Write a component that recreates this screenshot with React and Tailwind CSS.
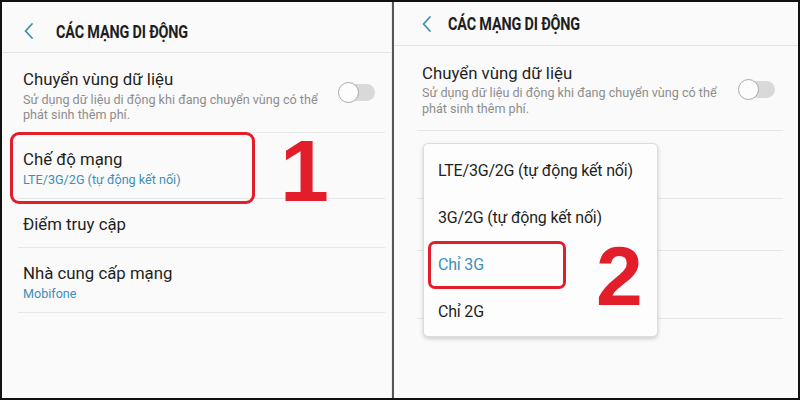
import React from "react";

const font = { fontFamily: "Roboto, 'Noto Sans', sans-serif" };
const numFont = { fontFamily: "'Liberation Sans', Arial, sans-serif" };

function Chevron() {
  return (
    <svg width="12" height="18" viewBox="0 0 12 18" className="shrink-0">
      <path d="M9 2 L2.5 9 L9 16" fill="none" stroke="#3b8fb0" strokeWidth="1.8" strokeLinecap="round" strokeLinejoin="round" />
    </svg>
  );
}

function Toggle() {
  return (
    <div className="relative w-[37px] h-[21px] flex items-center">
      <div className="absolute left-[4px] right-0 h-[17px] rounded-full bg-[#d9d9d9]" />
      <div className="absolute left-0 w-[21px] h-[21px] rounded-full bg-[#fdfdfd] border border-[#a9a9a9]" />
    </div>
  );
}

function Header({ h, pt, pl }) {
  return (
    <div className={`flex items-center border-b border-[#e3e3e3] ${h} ${pt}`}>
      <div className={`w-[54px] ${pl}`}>
        <Chevron />
      </div>
      <div className="text-[18px] font-bold text-[#1e1e1e] tracking-[-0.2px] scale-x-[0.8] origin-left whitespace-nowrap">
        CÁC MẠNG DI ĐỘNG
      </div>
    </div>
  );
}

function Row({ title, sub, h, pt, mx }) {
  return (
    <div className={`border-b border-[#e6e6e6] flex items-center ${mx} ${h} ${pt}`}>
      <div className="pl-[5px] flex flex-col gap-[2px]">
        <div className="text-[16.8px] leading-[22px] text-[#1f1f1f]">{title}</div>
        {sub && <div className="text-[12.6px] leading-[15px] text-[#3c8fb6]">{sub}</div>}
      </div>
    </div>
  );
}

function RoamingRow({ h, pt, gap, lh, mx, tmr, tmb }) {
  return (
    <div className={`border-b border-[#e6e6e6] flex items-center ${mx} ${h} ${pt}`}>
      <div className={`pl-[5px] flex flex-col w-[310px] ${gap}`}>
        <div className="text-[16.8px] leading-[22px] text-[#1f1f1f]">Chuyển vùng dữ liệu</div>
        <div className={`text-[12.6px] text-[#8d8d8d] ${lh}`}>
          Sử dụng dữ liệu di động khi đang chuyển vùng có thể phát sinh thêm phí.
        </div>
      </div>
      <div className={`ml-auto ${tmr} ${tmb}`}>
        <Toggle />
      </div>
    </div>
  );
}

export default function App() {
  const lmx = "ml-[16px] mr-[6px]";
  const rmx = "ml-[23px] mr-[15px]";
  return (
    <div style={font} className="w-[800px] h-[400px] border-2 border-[#111] bg-[#fafafa] flex overflow-hidden">
      {/* left screen: network settings list */}
      <div className="relative w-[390px] h-full bg-[#fafafa] border-r border-[#ececec]">
        <Header h="h-[51px]" pt="pt-[8px]" pl="pl-[21px]" />
        <RoamingRow h="h-[80px]" pt="pt-[4px]" gap="gap-[2px]" lh="leading-[15px]" mx={lmx} tmr="mr-[10px]" tmb="mb-[4px]" />
        <Row title="Chế độ mạng" sub="LTE/3G/2G (tự động kết nối)" h="h-[66px]" pt="pt-[3px]" mx={lmx} />
        <Row title="Điểm truy cập" h="h-[49px]" pt="pt-[2px]" mx={lmx} />
        <Row title="Nhà cung cấp mạng" sub="Mobifone" h="h-[65px]" pt="pt-[2px]" mx={lmx} />

        {/* annotation */}
        <div className="absolute left-[8px] top-[130px] w-[245px] h-[72px] border-[3px] border-[#e31e2b] rounded-[9px]" />
        <div className="absolute left-[278px] top-[119px] text-[88px] leading-[100px] font-bold text-[#e31e2b]" style={numFont}>
          1
        </div>
      </div>

      <div className="w-[2px] h-full bg-[#555]" />

      {/* right screen: network mode picker */}
      <div className="relative flex-1 h-full bg-[#fafafa]">
        <Header h="h-[44px]" pt="pt-0" pl="pl-[27px]" />
        <RoamingRow h="h-[85px]" pt="pt-[3px]" gap="gap-[1px]" lh="leading-[16px]" mx={rmx} tmr="mr-[8px]" tmb="mb-0" />
        <div className={`${rmx} border-b border-[#e6e6e6] h-[68px]`} />
        <div className={`${rmx} border-b border-[#e6e6e6] h-[52px]`} />
        <div className={`${rmx} border-b border-[#e6e6e6] h-[68px]`} />

        {/* popup menu */}
        <div className="absolute left-[29px] top-[141px] w-[235px] h-[194px] bg-[#fdfdfd] rounded-[5px] border border-[#dcdcdc] shadow-[0_2px_4px_rgba(0,0,0,0.18)] flex flex-col pt-[3px]">
          {[
            ["LTE/3G/2G (tự động kết nối)", false],
            ["3G/2G (tự động kết nối)", false],
            ["Chỉ 3G", true],
            ["Chỉ 2G", false],
          ].map(([label, sel]) => (
            <div
              key={label}
              className={`h-[48.5px] flex items-center pl-[14px] text-[16px] tracking-[-0.2px] ${sel ? "text-[#3c8fb6]" : "text-[#1f1f1f]"}`}
            >
              {label}
            </div>
          ))}
        </div>

        {/* annotation */}
        <div className="absolute left-[34px] top-[239px] w-[138px] h-[48px] border-[3px] border-[#e31e2b] rounded-[7px]" />
        <div className="absolute left-[202px] top-[226px] text-[84px] leading-[96px] font-bold text-[#e31e2b]" style={numFont}>
          2
        </div>
      </div>
    </div>
  );
}
